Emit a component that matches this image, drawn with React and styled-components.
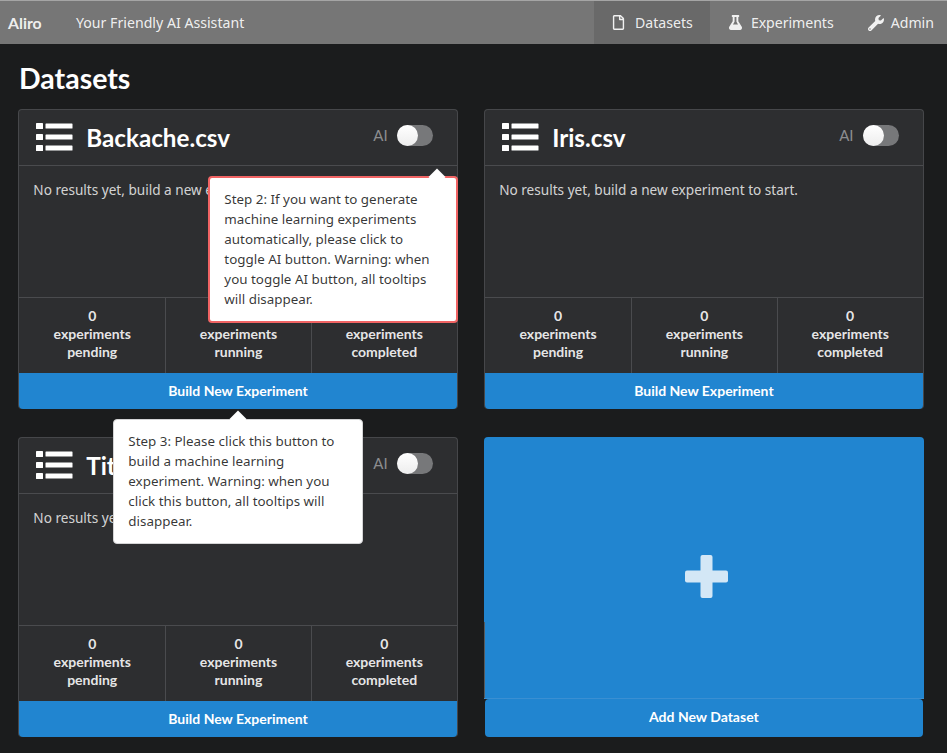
import React from 'react';
import styled, { createGlobalStyle } from 'styled-components';
import { FaRegFile, FaFlask, FaWrench } from 'react-icons/fa';

const GlobalStyle = createGlobalStyle`
  html, body {
    margin: 0;
    padding: 0;
    background: #1b1c1d;
  }
  body {
    font-family: 'Noto Sans', Lato, sans-serif;
    font-size: 13.6px;
    line-height: 20px;
    color: #fff;
  }
  * { box-sizing: border-box; }
`;

const Page = styled.div`
  width: 947px;
  height: 753px;
  overflow: hidden;
  background: #1b1c1d;
`;

const NavBar = styled.div`
  display: flex;
  align-items: stretch;
  height: 44px;
  background: #767676;
  border-top: 1px solid #a5a5a5;
  font-size: 14.15px;
  color: rgba(255, 255, 255, 0.9);
`;

const Brand = styled.div`
  display: flex;
  align-items: center;
  padding-left: 8px;
  width: 76px;
  font-family: Lato, sans-serif;
  font-weight: 700;
  font-size: 15.8px;
`;

const Tagline = styled.div`
  display: flex;
  align-items: center;
  flex: 1;
`;

const NavItem = styled.div`
  display: flex;
  align-items: center;
  gap: ${p => p.$gap || 8}px;
  padding: 0 ${p => p.$right || 17}px 0 ${p => p.$left || 20}px;
  background: ${p => (p.$active ? '#696969' : 'transparent')};
  letter-spacing: ${p => p.$tight ? '-0.05px' : '0'};
  svg { font-size: ${p => p.$icon || 15}px; }
`;

const Title = styled.h1`
  margin: 0;
  padding: 18px 0 15px 19px;
  font-family: Lato, sans-serif;
  font-size: 28.5px;
  font-weight: 700;
  line-height: 32px;
`;

const Grid = styled.div`
  display: grid;
  grid-template-columns: 439.4px 439.4px;
  grid-template-rows: 300px 300px;
  column-gap: 26.5px;
  row-gap: 28px;
  padding-left: 18.3px;
`;

const Card = styled.div`
  position: relative;
  display: flex;
  flex-direction: column;
  background: #2d2e30;
  border: 1px solid #46474a;
  border-bottom: none;
  border-radius: 4px;
`;

const CardHead = styled.div`
  display: flex;
  align-items: center;
  height: 56px;
  padding: 0 24px 0 17px;
  border-bottom: 1px solid #4a4b4e;
`;

const ListIcon = styled.svg`
  flex: none;
  width: 37px;
  height: 29px;
  margin-top: -1px;
  fill: #fff;
`;

const FileName = styled.div`
  flex: 1;
  margin-left: 13px;
  font-family: Lato, sans-serif;
  font-size: 24.2px;
  font-weight: 700;
`;

const AiLabel = styled.span`
  margin-right: 9px;
  font-family: Lato, sans-serif;
  font-size: 15px;
  color: #8c8d8f;
  position: relative;
  top: -3px;
`;

const Toggle = styled.div`
  position: relative;
  top: -2px;
  width: 36px;
  height: 21px;
  border-radius: 11px;
  background: #77787a;
  &::before {
    content: '';
    position: absolute;
    left: 0;
    top: 0;
    width: 21px;
    height: 21px;
    border-radius: 50%;
    background: linear-gradient(#fff, #ededed);
  }
`;

const CardBody = styled.div`
  height: 131px;
  padding: 14px;
  color: rgba(255, 255, 255, 0.8);
`;

const Stats = styled.div`
  display: grid;
  grid-template-columns: repeat(3, 1fr);
  height: 76px;
  border-top: 1px solid #4a4b4e;
`;

const Stat = styled.div`
  padding-top: 9px;
  text-align: center;
  font-family: Lato, sans-serif;
  font-size: 14px;
  font-weight: 700;
  line-height: 18px;
  color: rgba(255, 255, 255, 0.9);
  & + & { border-left: 1px solid #4a4b4e; }
`;

const BuildButton = styled.div`
  display: flex;
  align-items: center;
  justify-content: center;
  height: 36px;
  background: #2185d0;
  border-radius: 0 0 4px 4px;
  font-family: Lato, sans-serif;
  font-size: 14px;
  font-weight: 700;
`;

const AddCard = styled.div`
  display: flex;
  flex-direction: column;
`;

const AddPanel = styled.div`
  position: relative;
  display: flex;
  align-items: center;
  justify-content: center;
  height: 262px;
  background: #2185d0;
  border-bottom: 1px solid #3a8fd2;
  border-radius: 4px 4px 0 0;
  padding: 17px 0 0 6px;
  &::before {
    content: '';
    position: absolute;
    left: 0;
    top: 185px;
    width: 1px;
    height: 76px;
    background: #56595c;
  }
`;

const PlusIcon = styled.svg`
  display: block;
  width: 43px;
  height: 43px;
  fill: #d3e7f6;
`;

const AddButton = styled.div`
  display: flex;
  align-items: center;
  justify-content: center;
  height: 38px;
  margin: 0 1px;
  padding-bottom: 2px;
  background: #2185d0;
  border-radius: 4px;
  font-family: Lato, sans-serif;
  font-size: 14px;
  font-weight: 700;
`;

const Tooltip = styled.div`
  position: absolute;
  z-index: 5;
  left: ${p => p.$left}px;
  top: ${p => p.$top}px;
  width: 250px;
  padding: 11px 14px 12px;
  background: #fff;
  color: rgba(0, 0, 0, 0.8);
  border-radius: 4px;
  border: ${p => (p.$alert ? '2px solid #f16464' : '1px solid #d4d4d5')};
  font-size: 13.4px;
  line-height: 20px;
  &::before {
    content: '';
    position: absolute;
    top: -7px;
    left: ${p => p.$arrow}px;
    width: 12px;
    height: 12px;
    background: #fff;
    transform: rotate(45deg);
  }
`;

const STAT_LABELS = ['pending', 'running', 'completed'];

function DatasetCard({ name, children }) {
  return (
    <Card>
      <CardHead>
        <ListIcon viewBox="0 0 37 29">
          <rect x="0" y="0" width="7" height="6" rx="0.6" />
          <rect x="9.5" y="0.5" width="27" height="5" rx="0.6" />
          <rect x="0" y="11" width="7" height="6" rx="0.6" />
          <rect x="9.5" y="11.5" width="27" height="5" rx="0.6" />
          <rect x="0" y="22" width="7" height="6" rx="0.6" />
          <rect x="9.5" y="22.5" width="27" height="5" rx="0.6" />
        </ListIcon>
        <FileName>{name}</FileName>
        <AiLabel>AI</AiLabel>
        <Toggle />
      </CardHead>
      <CardBody>No results yet, build a new experiment to start.</CardBody>
      <Stats>
        {STAT_LABELS.map(label => (
          <Stat key={label}>
            0<br />experiments<br />{label}
          </Stat>
        ))}
      </Stats>
      <BuildButton>Build New Experiment</BuildButton>
      {children}
    </Card>
  );
}

export default function App() {
  return (
    <Page>
      <GlobalStyle />
      <NavBar>
        <Brand>Aliro</Brand>
        <Tagline>Your Friendly AI Assistant</Tagline>
        <NavItem $active $gap={9} $left={17}><FaRegFile />Datasets</NavItem>
        <NavItem $tight $left={18}><FaFlask />Experiments</NavItem>
        <NavItem $left={17} $right={13} $icon={16} $gap={7}><FaWrench />Admin</NavItem>
      </NavBar>
      <Title>Datasets</Title>
      <Grid>
        <DatasetCard name="Backache.csv">
          <Tooltip $alert $left={189} $top={66} $arrow={221}>
            Step 2: If you want to generate machine learning experiments automatically, please click to toggle AI button. Warning: when you toggle AI button, all tooltips will disappear.
          </Tooltip>
          <Tooltip $left={94} $top={309} $arrow={118}>
            Step 3: Please click this button to build a machine learning experiment. Warning: when you click this button, all tooltips will disappear.
          </Tooltip>
        </DatasetCard>
        <DatasetCard name="Iris.csv" />
        <DatasetCard name="Titanic.csv" />
        <AddCard>
          <AddPanel>
            <PlusIcon viewBox="0 0 43 43">
              <rect x="15.5" y="0" width="12" height="43" rx="2" />
              <rect x="0" y="15.5" width="43" height="12" rx="2" />
            </PlusIcon>
          </AddPanel>
          <AddButton>Add New Dataset</AddButton>
        </AddCard>
      </Grid>
    </Page>
  );
}
